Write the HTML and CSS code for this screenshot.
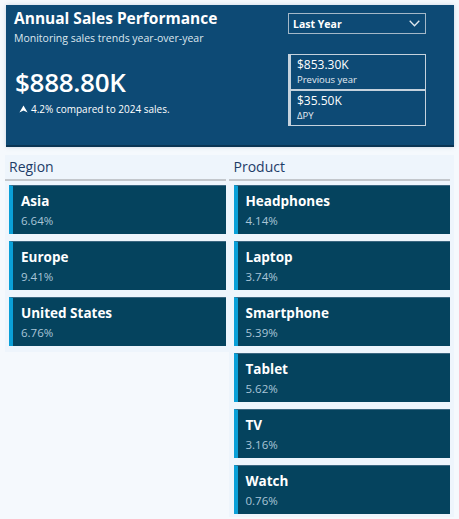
FILE: index.html
```html
<!DOCTYPE html>
<html>
<head>
<meta charset="utf-8">
<link rel="stylesheet" href="styles.css">
</head>
<body>
<div class="page">
  <section class="hero">
    <div class="hero-left">
      <h1 class="title">Annual Sales Performance</h1>
      <p class="subtitle">Monitoring sales trends year-over-year</p>
      <div class="big">$888.80K</div>
      <div class="change">
        <svg class="arrow" width="9" height="8" viewBox="0 0 9 8"><path d="M4.5 0.5 L8.6 7.5 L4.5 5.6 L0.4 7.5 Z" fill="#ffffff"/></svg>
        <span>4.2% compared to 2024 sales.</span>
      </div>
    </div>
    <div class="hero-right">
      <div class="select">
        <span>Last Year</span>
        <svg width="11" height="7" viewBox="0 0 11 7"><path d="M0.7 0.8 L5.5 5.8 L10.3 0.8" fill="none" stroke="#dfe8ef" stroke-width="1.3"/></svg>
      </div>
      <div class="kpis">
        <div class="kpi">
          <div class="kpi-value">$853.30K</div>
          <div class="kpi-label">Previous year</div>
        </div>
        <div class="kpi">
          <div class="kpi-value">$35.50K</div>
          <div class="kpi-label">ΔPY</div>
        </div>
      </div>
    </div>
  </section>

  <div class="panels">
    <section class="panel panel-left">
      <h2 class="panel-head">Region</h2>
      <div class="list">
        <div class="item"><div class="item-name">Asia</div><div class="item-pct">6.64%</div></div>
        <div class="item"><div class="item-name">Europe</div><div class="item-pct">9.41%</div></div>
        <div class="item"><div class="item-name">United States</div><div class="item-pct">6.76%</div></div>
      </div>
    </section>
    <section class="panel panel-right">
      <h2 class="panel-head">Product</h2>
      <div class="list">
        <div class="item"><div class="item-name">Headphones</div><div class="item-pct">4.14%</div></div>
        <div class="item"><div class="item-name">Laptop</div><div class="item-pct">3.74%</div></div>
        <div class="item"><div class="item-name">Smartphone</div><div class="item-pct">5.39%</div></div>
        <div class="item"><div class="item-name">Tablet</div><div class="item-pct">5.62%</div></div>
        <div class="item"><div class="item-name">TV</div><div class="item-pct">3.16%</div></div>
        <div class="item"><div class="item-name">Watch</div><div class="item-pct">0.76%</div></div>
      </div>
    </section>
  </div>
</div>
</body>
</html>
```

FILE: styles.css
```css
* { box-sizing: border-box; }
html, body {
  margin: 0;
  padding: 0;
  background: #f5f9fd;
  font-family: "Open Sans", "Noto Sans", sans-serif;
}
.page {
  width: 459px;
  height: 519px;
  padding: 5px 5px 0 5px;
  overflow: hidden;
}
.hero {
  margin-left: 1px;
  width: 448px;
  height: 142px;
  background: #0d4a75;
  border-bottom: 2px solid #0a3554;
  box-shadow: 0 0 4px rgba(120, 150, 180, 0.35);
  display: flex;
  justify-content: space-between;
  padding: 3px 0 0 8px;
  color: #ffffff;
}
.title {
  margin: 0;
  font-size: 15.5px;
  font-weight: 700;
  line-height: 20px;
}
.subtitle {
  margin: 3px 0 0 0;
  font-size: 10.5px;
  line-height: 14px;
  color: #dde7ef;
}
.big {
  margin: 20px 0 0 1px;
  font-size: 26px;
  font-weight: 600;
  line-height: 34px;
  letter-spacing: -0.3px;
}
.change {
  margin: 3px 0 0 5px;
  display: flex;
  align-items: center;
  gap: 3px;
  font-size: 10px;
  line-height: 14px;
}
.arrow { margin-top: -1px; }
.hero-right {
  width: 167px;
  padding-top: 5px;
  padding-right: 28px;
  display: flex;
  flex-direction: column;
  align-items: flex-end;
}
.select {
  width: 138px;
  height: 21px;
  border: 1px solid #a4b8c8;
  display: flex;
  align-items: center;
  justify-content: space-between;
  padding: 0 5px 0 4px;
  font-size: 10.5px;
  font-weight: 700;
}
.kpis {
  margin-top: 20px;
  width: 138px;
  display: flex;
  flex-direction: column;
}
.kpi {
  height: 36px;
  border: 1px solid #c5d2dd;
  border-left: 3px solid #c5d2dd;
  padding: 2px 0 0 6px;
}
.kpi-value {
  font-size: 12px;
  line-height: 16px;
}
.kpi-label {
  font-size: 9.5px;
  line-height: 13px;
  color: #e3ebf2;
}
.panels {
  margin-top: 8px;
  display: flex;
}
.panel {
  background: #eef5fc;
}
.panel-left {
  width: 224px;
  height: 197px;
  padding-right: 3px;
}
.panel-right {
  width: 226px;
  height: 362px;
  padding-right: 4px;
}
.panel-head {
  margin: 0;
  height: 26px;
  border-bottom: 2px solid #c3c7cc;
  font-size: 14px;
  font-weight: 400;
  line-height: 24px;
  color: #1d3c68;
  padding-left: 4px;
}
.panel-right .panel-head { padding-left: 5px; }
.list {
  padding-top: 4px;
  display: flex;
  flex-direction: column;
  gap: 7px;
}
.panel-left .list { padding-left: 4px; }
.panel-right .list { padding-left: 5px; }
.item {
  height: 49px;
  background: #05435e;
  border-left: 4px solid #0aa0d8;
  border-top: 1px solid #3b6680;
  padding: 6px 0 0 8px;
}
.item-name {
  font-size: 13.5px;
  font-weight: 700;
  line-height: 19px;
  color: #ffffff;
}
.item-pct {
  margin-top: 2px;
  font-size: 11.5px;
  line-height: 16px;
  color: #a9c5d8;
}
```
